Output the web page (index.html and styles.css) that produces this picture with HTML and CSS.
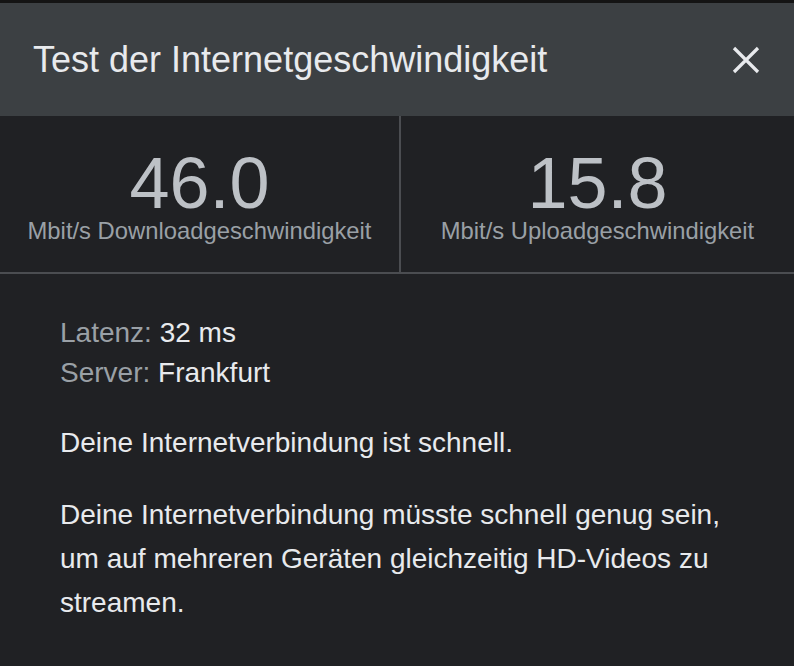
FILE: index.html
```html
<!DOCTYPE html>
<html lang="de">
<head>
    <meta charset="UTF-8">
    <meta name="viewport" content="width=device-width, initial-scale=1.0">
    <title>Test der Internetgeschwindigkeit</title>
    <link rel="stylesheet" href="styles.css">
</head>
<body>
    <div class="dialog">
        <div class="header">
            <h2>Test der Internetgeschwindigkeit</h2>
            <button class="close" aria-label="Schließen">
                <svg width="28" height="28" viewBox="0 0 28 28">
                    <path d="M2 2 L26 26 M26 2 L2 26" stroke="#e8eaed" stroke-width="3.2" fill="none"/>
                </svg>
            </button>
        </div>

        <div class="stats">
            <div class="stat">
                <div class="value">46.0</div>
                <div class="label">Mbit/s Downloadgeschwindigkeit</div>
            </div>
            <div class="stat">
                <div class="value">15.8</div>
                <div class="label">Mbit/s Uploadgeschwindigkeit</div>
            </div>
        </div>

        <div class="details">
            <div class="row"><span class="key">Latenz:</span> 32 ms</div>
            <div class="row"><span class="key">Server:</span> Frankfurt</div>
            <p>Deine Internetverbindung ist schnell.</p>
            <p>Deine Internetverbindung müsste schnell genug sein, um auf mehreren Geräten gleichzeitig HD-Videos zu streamen.</p>
        </div>
    </div>
</body>
</html>
```

FILE: styles.css
```css
body {
    font-family: "Liberation Sans", Arial, sans-serif;
    background-color: #202124;
    margin: 0;
    padding: 0;
}

.dialog {
    border-top: 3px solid #141414;
    background-color: #202124;
    min-height: 663px;
}

.header {
    background-color: #3c4043;
    height: 113px;
    display: flex;
    align-items: center;
    justify-content: space-between;
    padding: 0 34px 0 33px;
}

h2 {
    margin: 0;
    font-size: 36px;
    font-weight: normal;
    color: #e8eaed;
    line-height: 40px;
}

.close {
    background: none;
    border: none;
    padding: 0;
    width: 28px;
    height: 28px;
    cursor: pointer;
}

.close svg {
    display: block;
}

.stats {
    display: flex;
    border-bottom: 2px solid #4b4d51;
}

.stat {
    flex: 1;
    text-align: center;
    padding: 32px 0 28px;
}

.stat:first-child {
    flex: 0 0 399px;
    border-right: 2px solid #4b4d51;
}

.value {
    font-size: 72px;
    line-height: 70px;
    color: #bdc1c6;
}

.label {
    font-size: 23.8px;
    line-height: 26px;
    color: #9aa0a6;
}

.details {
    padding: 39px 50px 0 60px;
    color: #e8eaed;
    font-size: 28px;
}

.row {
    line-height: 40px;
}

.key {
    color: #9aa0a6;
}

.details p {
    margin: 28px 0 0;
    line-height: 44px;
}
```
